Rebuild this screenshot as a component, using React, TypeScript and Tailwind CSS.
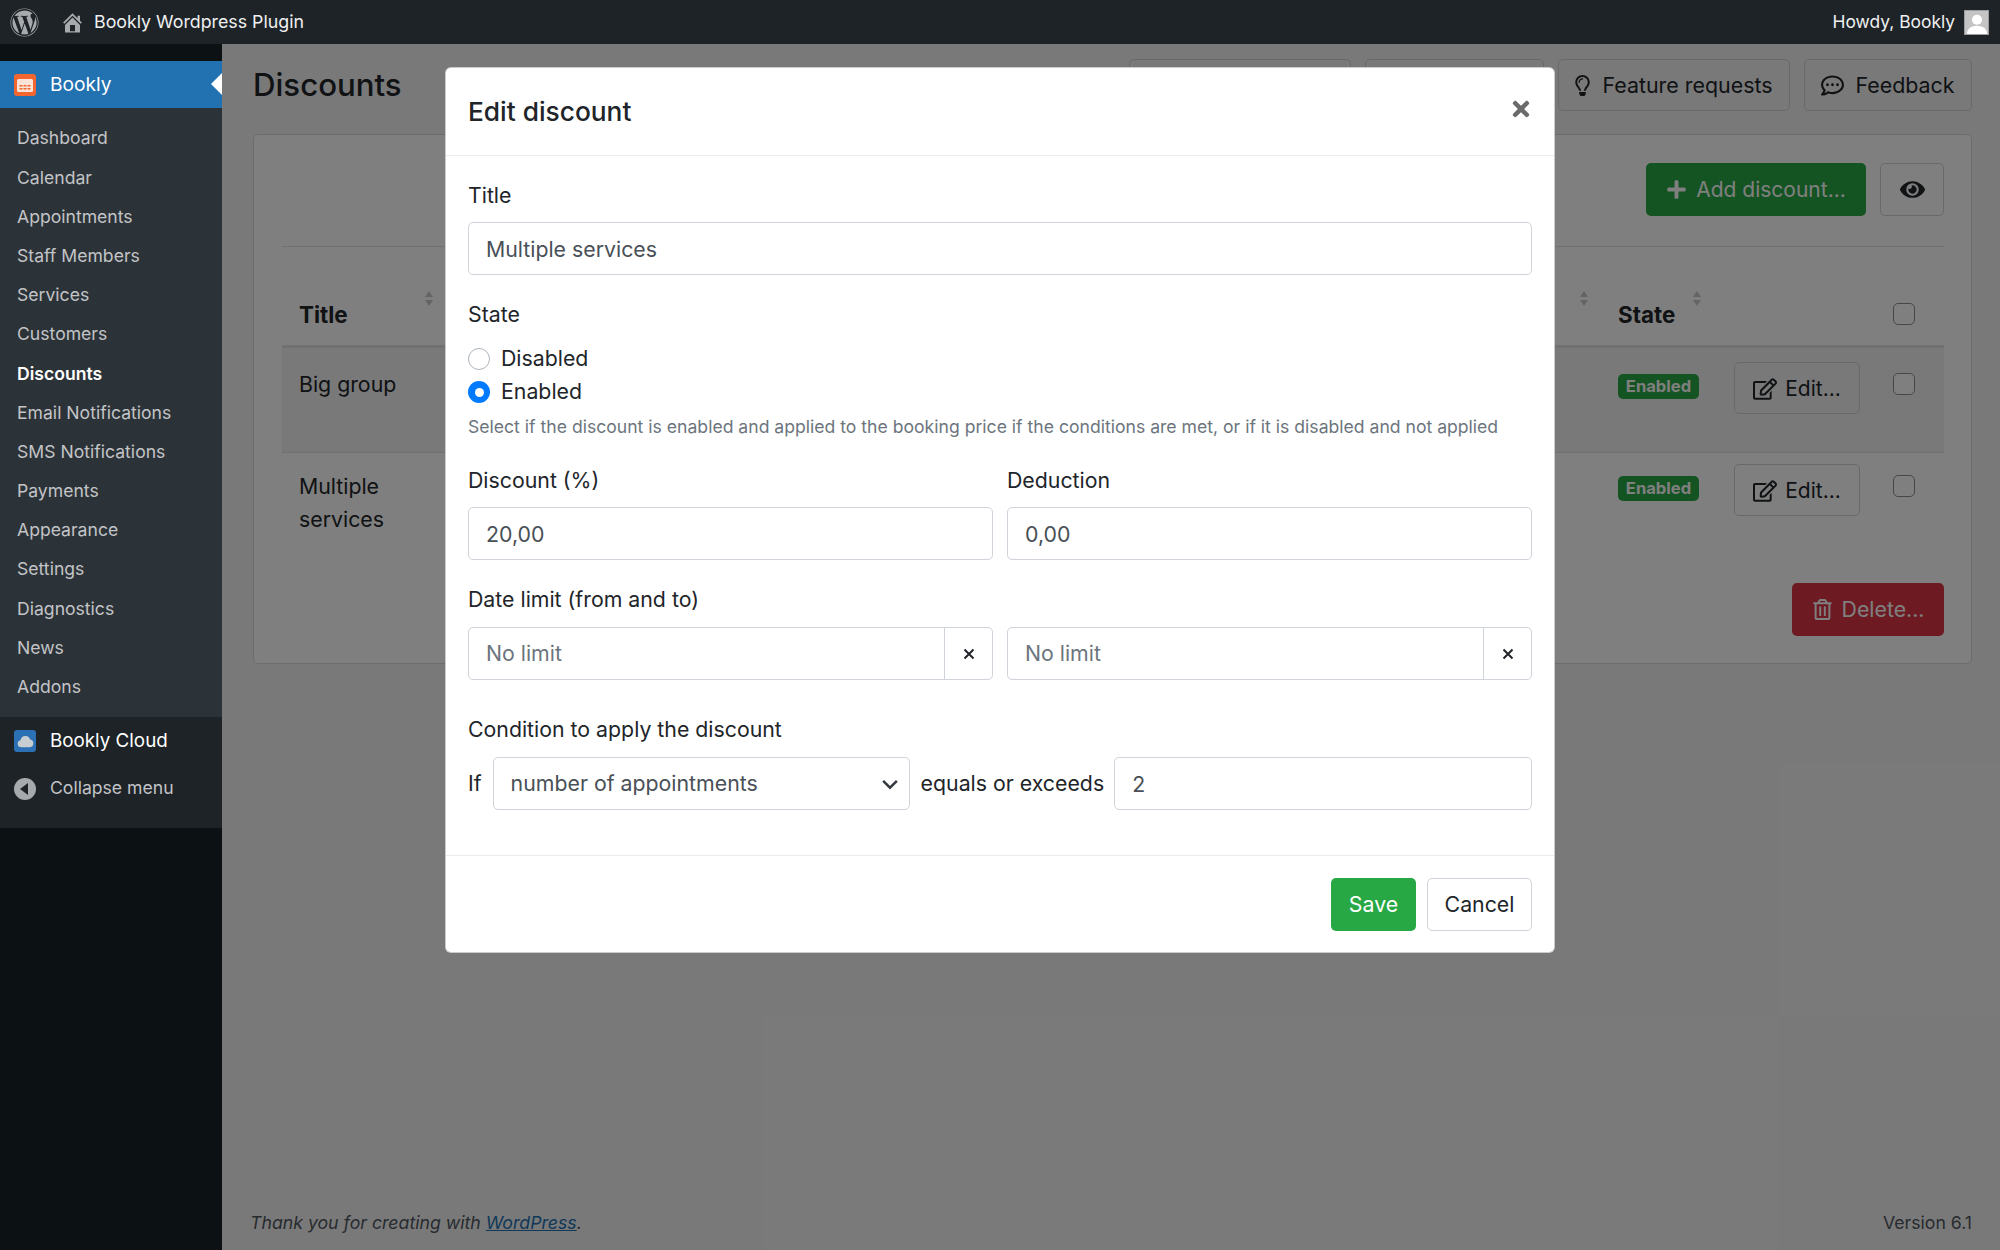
import React from 'react'
import { FaWordpress, FaRegLightbulb, FaRegCommentDots, FaPlus, FaEye, FaRegEdit, FaRegTrashAlt, FaTimes } from 'react-icons/fa'

const menu = [
  'Dashboard',
  'Calendar',
  'Appointments',
  'Staff Members',
  'Services',
  'Customers',
  'Discounts',
  'Email Notifications',
  'SMS Notifications',
  'Payments',
  'Appearance',
  'Settings',
  'Diagnostics',
  'News',
  'Addons',
]

const inputCls =
  'h-[53px] w-full rounded-[5px] border-[1.5px] border-[#ced4da] bg-white px-[17px] pt-[1px] text-[21.3px] text-[#495057] outline-none placeholder:text-[#6c757d]'

const Sort = ({ className }: { className: string }) => (
  <span className={`absolute top-[44px] flex flex-col gap-[3px] ${className}`}>
    <span className="h-0 w-0 border-x-[4px] border-b-[6px] border-x-transparent border-b-[#c9c9c9]" />
    <span className="h-0 w-0 border-x-[4px] border-t-[6px] border-x-transparent border-t-[#c9c9c9]" />
  </span>
)

const XMark = () => (
  <svg viewBox="0 0 16 16" className="h-[16px] w-[16px] fill-none stroke-[#212529] stroke-[2]">
    <path d="M3.5 3.5l9 9M12.5 3.5l-9 9" />
  </svg>
)

const Row = ({ lines, className }: { lines: string[]; className: string }) => (
  <div className={`grid grid-cols-[1336px_116px_159px_1fr] ${className}`}>
    <div className="pl-[17px] pt-[17px] text-[21.3px] leading-[33px] text-[#212529]">
      {lines.map((l) => (
        <div key={l}>{l}</div>
      ))}
    </div>
    <div className="pt-[23px]">
      <span className="flex h-[25px] w-[81px] items-center justify-center rounded-[5px] bg-[#28a745] text-[16.6px] font-bold text-white">
        Enabled
      </span>
    </div>
    <div className="pt-[11px]">
      <button className="flex h-[52px] w-[126px] items-center justify-center gap-[8px] rounded-[5px] border-[1.5px] border-[#ced4da] pt-[1px] text-[21px] text-[#212529]">
        <FaRegEdit size={24} />
        Edit...
      </button>
    </div>
    <div className="pt-[22px]">
      <span className="block h-[22px] w-[22px] rounded-[5px] border-[1.5px] border-[#8f8f8f] bg-white" />
    </div>
  </div>
)

const App = () => {
  return (
    <div className="relative flex h-[1250px] w-[2000px] flex-col overflow-hidden font-['Inter',sans-serif]">
      <header className="flex h-[44px] items-center bg-[#1d2327] pl-[10px] pr-[11px] text-[#f0f0f1]">
        <FaWordpress size={29} className="text-[#a7aaad]" />
        <svg viewBox="0 0 20 20" className="ml-[21px] h-[25px] w-[25px] fill-[#a7aaad]">
          <path d="M16 8.5l1.53 1.53-1.06 1.06L10 4.62l-6.47 6.47-1.06-1.06L10 2.5l4 4v-2h2v4zm-6-2.46l6 5.99V18H4v-5.97zM12 17v-5H8v5h4z" />
        </svg>
        <span className="ml-[9px] text-[17.8px]">Bookly Wordpress Plugin</span>
        <span className="ml-auto text-[17.4px]">Howdy, Bookly</span>
        <span className="ml-[9px] flex h-[25px] w-[25px] items-end justify-center overflow-hidden border border-[#9c9c9c] bg-[#c4c4c4]">
          <svg viewBox="0 0 24 24" className="h-[22px] w-[22px] fill-white">
            <circle cx="12" cy="8.5" r="5.5" />
            <path d="M1 24c0-6 5-9 11-9s11 3 11 9z" />
          </svg>
        </span>
      </header>

      <div className="flex flex-1">
        <aside className="flex w-[222px] flex-col bg-[#0c1214] pt-[17px]">
          <div className="relative flex h-[47px] items-center bg-[#2271b1] pl-[14px] text-[19.2px] text-white">
            <svg viewBox="0 0 22 22" className="h-[22px] w-[22px]">
              <rect width="22" height="22" rx="3" fill="#f4662f" />
              <rect x="3" y="5" width="16" height="13" rx="1.5" fill="#fbe3d8" />
              <path d="M5.5 11h3v1.5h-3zM9.5 11h3v1.5h-3zM13.5 11h3v1.5h-3zM5.5 14h3v1.5h-3zM9.5 14h3v1.5h-3zM13.5 14h3v1.5h-3z" fill="#f4662f" />
            </svg>
            <span className="ml-[14px]">Bookly</span>
            <span className="absolute right-0 top-[12px] h-0 w-0 border-y-[11px] border-r-[11px] border-y-transparent border-r-white" />
          </div>
          <nav className="h-[609px] bg-[#2c3338] pt-[11px] text-[17.6px] text-[#c3c4c7]">
            {menu.map((m) => (
              <div
                key={m}
                className={`flex h-[39.2px] items-center pl-[17px] ${m === 'Discounts' ? 'font-semibold text-white' : ''}`}
              >
                {m}
              </div>
            ))}
          </nav>
          <div className="h-[111px] bg-[#1d2327]">
            <div className="flex h-[48px] items-center pl-[14px] text-[18.8px] text-white">
              <span className="flex h-[22px] w-[22px] items-center justify-center rounded-[3px] bg-[#2c71b5]">
                <svg viewBox="0 0 24 24" className="h-[17px] w-[17px] fill-[#c9ced3]">
                  <path d="M6 20a5 5 0 0 1-1-9.9 7 7 0 0 1 13.5-1A5.5 5.5 0 0 1 18 20z" />
                </svg>
              </span>
              <span className="ml-[14px]">Bookly Cloud</span>
            </div>
            <div className="flex h-[47px] items-center pl-[14px] text-[17.6px] text-[#c3c4c7]">
              <span className="flex h-[22px] w-[22px] items-center justify-center rounded-full bg-[#a7aaad]">
                <span className="mr-[3px] h-0 w-0 border-y-[6px] border-r-[8px] border-y-transparent border-r-[#1d2327]" />
              </span>
              <span className="ml-[14px]">Collapse menu</span>
            </div>
          </div>
        </aside>

        <main className="flex flex-1 flex-col bg-[#f3f3f4] pl-[31px] pr-[28px] text-[#212529]">
          <div className="flex items-start pt-[15px]">
            <h1 className="mt-[4px] text-[31.2px] font-medium leading-[44px]">Discounts</h1>
            <div className="ml-auto flex gap-[14px] text-[21.4px]">
              <span className="h-[52px] w-[222px] rounded-[5px] border-[1.5px] border-[#ced4da]" />
              <span className="h-[52px] w-[179px] rounded-[5px] border-[1.5px] border-[#ced4da]" />
              <button className="flex h-[52px] w-[232px] items-center justify-center gap-[9px] rounded-[5px] border-[1.5px] border-[#ced4da] pr-[3px]">
                <FaRegLightbulb size={21} />
                Feature requests
              </button>
              <button className="flex h-[52px] w-[168px] items-center justify-center gap-[11px] rounded-[5px] border-[1.5px] border-[#ced4da]">
                <FaRegCommentDots size={23} />
                Feedback
              </button>
            </div>
          </div>

          <section className="mt-[23px] h-[530px] rounded-[5px] border-[1.5px] border-[#d8d8d8] bg-white pl-[28px] pr-[27px] pt-[28px]">
            <div className="flex justify-end gap-[14px] text-[21px]">
              <button className="flex h-[53px] w-[220px] items-center justify-center gap-[9px] rounded-[5px] bg-[#28a745] text-white">
                <FaPlus size={21} />
                Add discount...
              </button>
              <button className="flex h-[53px] w-[64px] items-center justify-center rounded-[5px] border-[1.5px] border-[#ced4da]">
                <FaEye size={25} />
              </button>
            </div>
            <div className="mt-[30px] border-t border-[#dee2e6]" />
            <div className="relative grid h-[101px] grid-cols-[1336px_275px_1fr] border-b-[3px] border-[#dee2e6]">
              <div className="pl-[17px] pt-[51px] text-[22.4px] font-bold leading-[33px]">Title</div>
              <div className="pt-[51px] text-[22.4px] font-bold leading-[33px]">State</div>
              <div className="pt-[56px]">
                <span className="block h-[22px] w-[22px] rounded-[5px] border-[1.5px] border-[#8f8f8f] bg-white" />
              </div>
              <Sort className="left-[143px]" />
              <Sort className="left-[1298px]" />
              <Sort className="left-[1411px]" />
            </div>
            <Row lines={['Big group']} className="h-[104px] bg-[#f2f2f2] pt-[3px]" />
            <Row lines={['Multiple', 'services']} className="h-[108px] border-t border-[#dee2e6]" />
            <div className="mt-[23px] flex justify-end">
              <button className="flex h-[53px] w-[152px] items-center justify-center gap-[9px] rounded-[5px] bg-[#dc3545] text-[21.3px] text-white">
                <FaRegTrashAlt size={21} />
                Delete...
              </button>
            </div>
          </section>

          <footer className="mt-auto flex h-[40px] items-start justify-between text-[17.7px] text-[#50575e]">
            <span className="-ml-[3px] italic">
              Thank you for creating with <span className="text-[#2271b1] underline">WordPress</span>.
            </span>
            <span>Version 6.1</span>
          </footer>
        </main>
      </div>

      {/* modal backdrop only dims the content area, wp bar + menu stay on top */}
      <div className="absolute bottom-0 left-[222px] right-0 top-[44px] bg-black/50" />

      <div className="absolute left-[445px] top-[67px] flex h-[886px] w-[1110px] flex-col rounded-[6px] border border-black/20 bg-white text-[#212529]">
        <div className="flex h-[88px] shrink-0 items-center justify-between border-b-[1.5px] border-[#e9ecef] px-[22px]">
          <h5 className="text-[26.3px] font-medium">Edit discount</h5>
          <FaTimes size={24} className="-mr-[1px] -mt-[5px] text-[#6a6a6a]" />
        </div>

        <div className="flex flex-1 flex-col px-[22px] text-[21.3px]">
          <label className="mt-[24px] leading-[30px]">Title</label>
          <input readOnly defaultValue="Multiple services" className={`mt-[12px] ${inputCls}`} />

          <label className="mt-[24px] leading-[30px]">State</label>
          <div className="mt-[13px] flex h-[33px] items-center gap-[11px]">
            <span className="h-[22px] w-[22px] rounded-full border-[1.5px] border-[#adb5bd]" />
            Disabled
          </div>
          <div className="flex h-[34px] items-center gap-[11px]">
            <span className="flex h-[22px] w-[22px] items-center justify-center rounded-full bg-[#007bff]">
              <span className="h-[9px] w-[9px] rounded-full bg-white" />
            </span>
            Enabled
          </div>
          <p className="mt-[6px] text-[17.6px] leading-[24px] text-[#6c757d]">
            Select if the discount is enabled and applied to the booking price if the conditions are met, or if it is
            disabled and not applied
          </p>

          <div className="mt-[26px] grid grid-cols-2 gap-x-[14px]">
            <div>
              <label className="block leading-[30px]">Discount (%)</label>
              <input readOnly defaultValue="20,00" className={`mt-[12px] ${inputCls}`} />
            </div>
            <div>
              <label className="block leading-[30px]">Deduction</label>
              <input readOnly defaultValue="0,00" className={`mt-[12px] ${inputCls}`} />
            </div>
          </div>

          <label className="mt-[24px] leading-[30px]">Date limit (from and to)</label>
          <div className="mt-[13px] grid grid-cols-2 gap-x-[14px]">
            {[0, 1].map((i) => (
              <div key={i} className="flex h-[53px] rounded-[5px] border-[1.5px] border-[#ced4da]">
                <input
                  readOnly
                  placeholder="No limit"
                  className="min-w-0 flex-1 rounded-l-[5px] px-[17px] pt-[1px] text-[21.3px] outline-none placeholder:text-[#6c757d]"
                />
                <span className="flex w-[48px] items-center justify-center border-l-[1.5px] border-[#ced4da]">
                  <XMark />
                </span>
              </div>
            ))}
          </div>

          <label className="mt-[34px] leading-[30px]">Condition to apply the discount</label>
          <div className="mt-[13px] flex items-center">
            <span>If</span>
            <div className="ml-[11px] flex h-[53px] w-[417px] shrink-0 items-center justify-between rounded-[5px] border-[1.5px] border-[#ced4da] pl-[17px] pr-[9px] text-[#495057]">
              number of appointments
              <svg viewBox="0 0 16 16" className="h-[20px] w-[20px] fill-none stroke-[#343a40] stroke-2">
                <path d="M2.5 5.5 8 11l5.5-5.5" />
              </svg>
            </div>
            <span className="ml-[11px] whitespace-nowrap">equals or exceeds</span>
            <input readOnly defaultValue="2" className={`ml-[10px] min-w-0 flex-1 ${inputCls}`} />
          </div>
        </div>

        <div className="flex h-[97px] shrink-0 items-start justify-end gap-[11px] border-t-[1.5px] border-[#e9ecef] px-[22px] pt-[22px] text-[21.3px]">
          <button className="h-[53px] w-[85px] rounded-[5px] bg-[#28a745] text-white">Save</button>
          <button className="h-[53px] w-[105px] rounded-[5px] border-[1.5px] border-[#ced4da]">Cancel</button>
        </div>
      </div>
    </div>
  )
}

export default App
